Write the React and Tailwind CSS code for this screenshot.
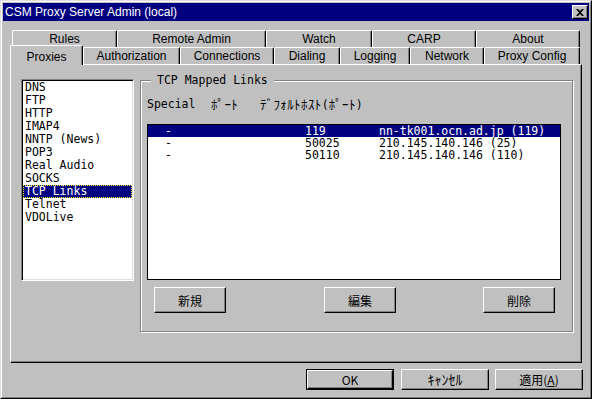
import React from "react";

const ROW1 = [
  { label: "Rules", w: 105 },
  { label: "Remote Admin", w: 149 },
  { label: "Watch", w: 106 },
  { label: "CARP", w: 104 },
  { label: "About", w: 104 },
];

const ROW2 = [
  { label: "Authorization", w: 97 },
  { label: "Connections", w: 94 },
  { label: "Dialing", w: 66 },
  { label: "Logging", w: 70 },
  { label: "Network", w: 74 },
  { label: "Proxy Config", w: 96 },
];

const PROXIES = [
  "DNS",
  "FTP",
  "HTTP",
  "IMAP4",
  "NNTP (News)",
  "POP3",
  "Real Audio",
  "SOCKS",
  "TCP Links",
  "Telnet",
  "VDOLive",
];

const LINKS = [
  { special: "-", port: "119", host: "nn-tk001.ocn.ad.jp (119)", selected: true },
  { special: "-", port: "50025", host: "210.145.140.146 (25)" },
  { special: "-", port: "50110", host: "210.145.140.146 (110)" },
];

const sans = "font-['Liberation_Sans','Noto_Sans_CJK_JP',sans-serif]";
const mono = "font-['DejaVu_Sans_Mono','Noto_Sans_CJK_JP',monospace]";
const raised =
  "border border-t-white border-l-white border-r-black border-b-black shadow-[inset_-1px_-1px_0_#808080]";

function Tab({ label, w }) {
  return (
    <div
      style={{ width: w }}
      className="h-[17px] shrink-0 flex items-center justify-center rounded-t-[2px] border-t border-l border-r border-t-white border-l-white border-r-black shadow-[inset_-1px_0_0_#808080] text-[12px] text-black"
    >
      {label}
    </div>
  );
}

function Button({ children, className = "" }) {
  return (
    <div
      className={`flex items-center justify-center bg-[#c0c0c0] text-[12px] text-black font-['Noto_Sans_CJK_JP',sans-serif] ${raised} ${className}`}
    >
      {children}
    </div>
  );
}

export default function App() {
  return (
    <div className={`w-[592px] h-[399px] bg-[#c0c0c0] border border-t-[#dfdfdf] border-l-[#dfdfdf] border-r-black border-b-black ${sans}`}>
      <div className="h-full border border-t-white border-l-white border-r-[#808080] border-b-[#808080] p-[1px] flex flex-col">
        {/* title bar */}
        <div className="h-[18px] shrink-0 bg-[#000080] flex items-center justify-between pl-[2px] pr-[1px]">
          <span className="text-white text-[12px] leading-none">
            CSM Proxy Server Admin (local)
          </span>
          <div className="w-[16px] h-[14px] bg-[#c0c0c0] border border-t-white border-l-white border-r-black border-b-black shadow-[inset_-1px_-1px_0_#808080] flex items-center justify-center">
            <svg width="8" height="7" viewBox="0 0 8 7">
              <path d="M0 0h2l2 2 2-2h2L5 3.5 8 7H6L4 5 2 7H0l3-3.5z" fill="#000" />
            </svg>
          </div>
        </div>

        {/* tabs */}
        <div className="mt-[9px] ml-[9px] flex">
          {ROW1.map((t) => (
            <Tab key={t.label} {...t} />
          ))}
        </div>
        <div className="ml-[7px] h-[17px] flex items-end">
          <div className="relative z-10 w-[73px] h-[20px] mb-[-1px] shrink-0 bg-[#c0c0c0] flex justify-center pt-[2px] rounded-t-[2px] border-t border-l border-r border-t-white border-l-white border-r-black shadow-[inset_-1px_0_0_#808080] text-[12px] text-black">
            Proxies
          </div>
          {ROW2.map((t) => (
            <Tab key={t.label} {...t} />
          ))}
        </div>

        {/* panel */}
        <div className={`ml-[7px] w-[572px] h-[299px] ${raised} flex items-start pl-[10px] pt-[14px]`}>
          {/* proxy list */}
          <div className={`w-[113px] h-[202px] bg-white border border-t-[#808080] border-l-[#808080] border-r-white border-b-white shadow-[inset_1px_1px_0_#000,inset_-1px_-1px_0_#dfdfdf] p-[1px] ${mono} text-[11.5px] leading-[13px]`}>
            {PROXIES.map((p) =>
              p === "TCP Links" ? (
                <div
                  key={p}
                  className="h-[13px] pl-[1px] bg-[#000080] text-white border border-dotted border-[#ffff00] leading-[11px] whitespace-pre"
                >
                  {p}
                </div>
              ) : (
                <div key={p} className="h-[13px] pl-[2px] text-black whitespace-pre">
                  {p}
                </div>
              )
            )}
          </div>

          {/* group box */}
          <div className={`relative ml-[6px] mt-[1px] w-[433px] h-[252px] border border-[#808080] shadow-[inset_1px_1px_0_#fff,1px_1px_0_#fff] pl-[6px] pt-[17px] ${mono} text-[11.5px] leading-[13px] text-black`}>
            <span className="absolute left-[10px] top-[-7px] bg-[#c0c0c0] px-[6px] whitespace-pre">
              TCP Mapped Links
            </span>
            <div className="flex h-[13px] items-center whitespace-pre">
              <span className="w-[64px]">Special</span>
              <span className="w-[49px] text-[13px] tracking-[0.4px]">ﾎﾟｰﾄ</span>
              <span>
                <span className="text-[13px] tracking-[0.4px]">ﾃﾞﾌｫﾙﾄﾎｽﾄ</span>(
                <span className="text-[13px] tracking-[0.4px]">ﾎﾟｰﾄ</span>)
              </span>
            </div>

            <div className="mt-[13px] w-[414px] h-[156px] bg-white border border-black leading-[12px]">
              {LINKS.map((r) => (
                <div
                  key={r.port}
                  className={`flex h-[12px] whitespace-pre ${
                    r.selected ? "bg-[#000080] text-white" : "text-black"
                  }`}
                >
                  <span className="w-[157px] pl-[17px]">{r.special}</span>
                  <span className="w-[74px]">{r.port}</span>
                  <span>{r.host}</span>
                </div>
              ))}
            </div>

            <div className="mt-[7px] flex">
              <Button className="ml-[7px] w-[72px] h-[26px]">新規</Button>
              <Button className="ml-[98px] w-[72px] h-[26px]">編集</Button>
              <Button className="ml-[87px] w-[72px] h-[26px]">削除</Button>
            </div>
          </div>
        </div>

        {/* dialog buttons */}
        <div className="mt-[6px] ml-[303px] flex">
          <div className="w-[88px] h-[21px] border border-black">
            <Button className="w-full h-full font-['Liberation_Sans',sans-serif]">OK</Button>
          </div>
          <Button className="ml-[7px] w-[88px] h-[21px] text-[14px]">ｷｬﾝｾﾙ</Button>
          <Button className="ml-[6px] w-[88px] h-[21px]">
            <span>
              適用(<span className="underline">A</span>)
            </span>
          </Button>
        </div>
      </div>
    </div>
  );
}
